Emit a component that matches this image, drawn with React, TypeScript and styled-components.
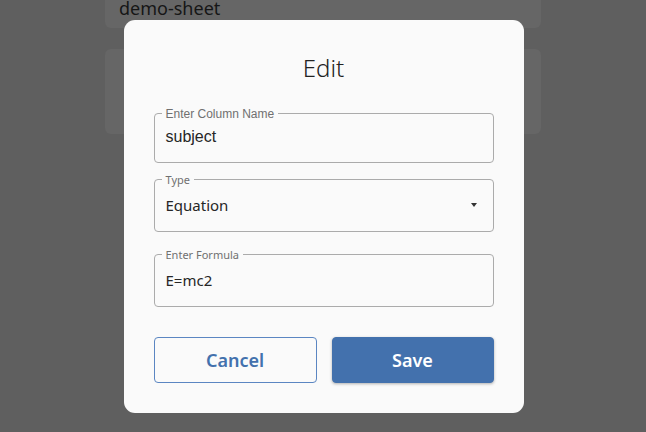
import React from "react";
import styled, { createGlobalStyle } from "styled-components";

const GlobalStyle = createGlobalStyle`
  html, body {
    margin: 0;
    padding: 0;
    background: #5f5f5f;
    overflow: hidden;
  }
  * {
    box-sizing: border-box;
  }
`;

const Page = styled.div`
  width: 100vw;
  height: 100vh;
  background: #5f5f5f;
`;

const SheetList = styled.div`
  width: 436px;
  margin: -4px auto 0;
  display: flex;
  flex-direction: column;
  gap: 21px;
`;

const SheetCard = styled.div<{ $height?: number }>`
  background: #666666;
  border-radius: 0 0 6px 6px;
  padding: 0 14px 8px;
  min-height: ${(p) => (p.$height ? `${p.$height}px` : "auto")};
  font-family: "Noto Sans", "Open Sans", sans-serif;
  font-size: 18px;
  line-height: 24px;
  color: #161616;
  &:not(:first-child) {
    border-radius: 6px;
  }
`;

const Overlay = styled.div`
  position: fixed;
  inset: 0;
  display: flex;
  align-items: center;
  justify-content: center;
  padding-left: 1px;
`;

const Dialog = styled.div`
  width: 400px;
  height: 393px;
  background: #fafafa;
  border-radius: 11px;
  padding: 32px 30px 30px;
  display: flex;
  flex-direction: column;
`;

const Title = styled.h2`
  margin: 0 0 24px;
  text-align: center;
  font-family: "Noto Sans", "Open Sans", sans-serif;
  font-weight: 300;
  font-size: 24px;
  line-height: 32px;
  color: #222;
`;

const Fields = styled.div`
  display: flex;
  flex-direction: column;
`;

const Field = styled.fieldset<{ $top: number; $bottom: number; $gap: number }>`
  margin: 0 0 ${(p) => p.$gap}px;
  padding: ${(p) => p.$top}px 11px ${(p) => p.$bottom}px;
  border: 1px solid #ababab;
  border-radius: 4px;
  min-width: 0;
  display: flex;
  align-items: center;
  justify-content: space-between;
`;

const Legend = styled.legend<{ $plain?: boolean }>`
  margin-left: -4px;
  padding: 0 4px;
  font-family: ${(p) =>
    p.$plain ? `"Liberation Sans", Arial, sans-serif` : `"Noto Sans", "Open Sans", sans-serif`};
  font-size: ${(p) => (p.$plain ? 12 : 11)}px;
  line-height: 12px;
  color: #707070;
`;

const Value = styled.span<{ $plain?: boolean }>`
  font-family: ${(p) =>
    p.$plain ? `"Liberation Sans", Arial, sans-serif` : `"Noto Sans", "Open Sans", sans-serif`};
  font-size: ${(p) => (p.$plain ? 16 : 15)}px;
  line-height: 20px;
  color: #262626;
`;

const Caret = styled.span`
  width: 0;
  height: 0;
  margin-right: 5px;
  border-left: 3.5px solid transparent;
  border-right: 3.5px solid transparent;
  border-top: 4px solid #333;
`;

const Actions = styled.div`
  display: grid;
  grid-template-columns: 163px 162px;
  gap: 15px;
  margin-top: 7px;
`;

const Button = styled.button<{ $primary?: boolean }>`
  height: 46px;
  border-radius: 4px;
  font-family: "Noto Sans", "Open Sans", sans-serif;
  font-weight: 600;
  font-size: 18px;
  cursor: pointer;
  border: 1px solid ${(p) => (p.$primary ? "#4371ad" : "#5b86c2")};
  background: ${(p) => (p.$primary ? "#4371ad" : "transparent")};
  color: ${(p) => (p.$primary ? "#ffffff" : "#4371ad")};
  box-shadow: ${(p) => (p.$primary ? "0 1px 3px rgba(0,0,0,0.3)" : "none")};
`;

export default function App() {
  return (
    <Page>
      <GlobalStyle />
      <SheetList>
        <SheetCard>demo-sheet</SheetCard>
        <SheetCard $height={85} />
      </SheetList>
      <Overlay>
        <Dialog>
          <Title>Edit</Title>
          <Fields>
            <Field $top={7} $bottom={15} $gap={11}>
              <Legend $plain>Enter Column Name</Legend>
              <Value $plain>subject</Value>
            </Field>
            <Field $top={9} $bottom={16} $gap={17}>
              <Legend>Type</Legend>
              <Value>Equation</Value>
              <Caret />
            </Field>
            <Field $top={9} $bottom={16} $gap={23}>
              <Legend>Enter Formula</Legend>
              <Value>E=mc2</Value>
            </Field>
          </Fields>
          <Actions>
            <Button>Cancel</Button>
            <Button $primary>Save</Button>
          </Actions>
        </Dialog>
      </Overlay>
    </Page>
  );
}
